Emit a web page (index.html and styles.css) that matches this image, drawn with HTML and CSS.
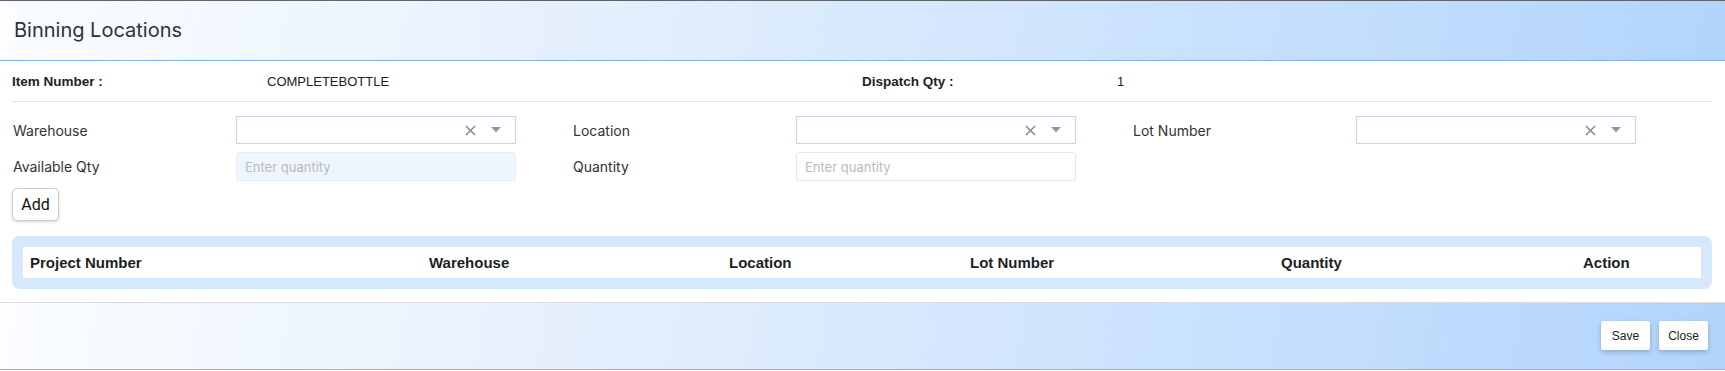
FILE: index.html
```html
<!DOCTYPE html>
<html lang="en">
<head>
<meta charset="utf-8">
<title>Binning Locations</title>
<link rel="stylesheet" href="styles.css">
</head>
<body>
<div class="topline"></div>
<div class="modal">
  <header class="modal-header">
    <h4 class="modal-title">Binning Locations</h4>
  </header>
  <div class="modal-body">
    <div class="info-row">
      <span class="info-label">Item Number :</span>
      <span class="info-value">COMPLETEBOTTLE</span>
      <span class="info-label">Dispatch Qty :</span>
      <span class="info-value">1</span>
    </div>
    <div class="form-grid">
      <label class="field-label">Warehouse</label>
      <div class="select">
        <span class="select-clear"><svg width="11" height="11" viewBox="0 0 11 11"><path d="M1 1 L10 10 M10 1 L1 10" stroke="#8a8a8a" stroke-width="1.5" fill="none"/></svg></span>
        <span class="select-arrow"><svg width="10" height="6" viewBox="0 0 10 6"><path d="M0 0 H10 L5 5.5 Z" fill="#9a9a9a"/></svg></span>
      </div>
      <span class="spacer"></span>
      <label class="field-label">Location</label>
      <div class="select">
        <span class="select-clear"><svg width="11" height="11" viewBox="0 0 11 11"><path d="M1 1 L10 10 M10 1 L1 10" stroke="#8a8a8a" stroke-width="1.5" fill="none"/></svg></span>
        <span class="select-arrow"><svg width="10" height="6" viewBox="0 0 10 6"><path d="M0 0 H10 L5 5.5 Z" fill="#9a9a9a"/></svg></span>
      </div>
      <span class="spacer"></span>
      <label class="field-label">Lot Number</label>
      <div class="select">
        <span class="select-clear"><svg width="11" height="11" viewBox="0 0 11 11"><path d="M1 1 L10 10 M10 1 L1 10" stroke="#8a8a8a" stroke-width="1.5" fill="none"/></svg></span>
        <span class="select-arrow"><svg width="10" height="6" viewBox="0 0 10 6"><path d="M0 0 H10 L5 5.5 Z" fill="#9a9a9a"/></svg></span>
      </div>
      <span class="spacer"></span>

      <label class="field-label">Available Qty</label>
      <input class="text-input disabled" type="text" placeholder="Enter quantity" disabled>
      <span class="spacer"></span>
      <label class="field-label">Quantity</label>
      <input class="text-input" type="text" placeholder="Enter quantity">
      <span class="spacer"></span>
    </div>
    <button class="add-btn" type="button">Add</button>
    <div class="table-box">
      <div class="table-head">
        <span>Project Number</span>
        <span>Warehouse</span>
        <span>Location</span>
        <span>Lot Number</span>
        <span>Quantity</span>
        <span>Action</span>
      </div>
    </div>
  </div>
  <footer class="modal-footer">
    <button class="footer-btn" type="button">Save</button>
    <button class="footer-btn" type="button">Close</button>
  </footer>
</div>
</body>
</html>
```

FILE: styles.css
```css
* { box-sizing: border-box; }

html, body {
  margin: 0;
  padding: 0;
  background: #ffffff;
  width: 1725px;
  height: 371px;
  overflow: hidden;
}

.topline {
  height: 1px;
  background: #5f646b;
}

.modal {
  display: flex;
  flex-direction: column;
}

.modal-header {
  height: 60px;
  background: linear-gradient(100deg, #fbfdff 0%, #e4effd 35%, #c9e1fd 70%, #b2d4fc 100%);
  border-bottom: 1px solid #7ab3f4;
  display: flex;
  align-items: center;
  padding-left: 14px;
}

.modal-title {
  margin: 0;
  font-family: Inter, "Noto Sans", sans-serif;
  font-weight: 400;
  font-size: 20px;
  color: #2f3339;
  position: relative;
  top: -1px;
}

.modal-body {
  padding: 0 13px 0 12px;
}

.info-row {
  display: grid;
  grid-template-columns: 255px 595px 255px 1fr;
  align-items: center;
  height: 41px;
  border-bottom: 1px solid #e2e2e2;
  font-family: "Liberation Sans", Arial, sans-serif;
  color: #222;
}

.info-label {
  font-weight: 700;
  font-size: 13.5px;
}

.info-value {
  font-size: 13px;
}

.form-grid {
  margin-top: 14px;
  display: grid;
  grid-template-columns: repeat(3, 224px 280px 56px);
  grid-template-rows: 28px 29px;
  row-gap: 8px;
  align-items: center;
}

.field-label {
  font-family: Inter, "Noto Sans", sans-serif;
  font-size: 14px;
  color: #333;
  padding-left: 1px;
}

.select {
  height: 28px;
  border: 1px solid #c7d6e6;
  background: #fff;
  display: flex;
  align-items: center;
  justify-content: flex-end;
  padding-right: 14px;
  gap: 15px;
}

.select-clear, .select-arrow {
  display: flex;
  align-items: center;
}

.text-input {
  height: 29px;
  width: 100%;
  border: 1px solid #e4e6e9;
  border-radius: 3px;
  background: #fff;
  padding: 0 8px;
  font-family: Inter, "Noto Sans", sans-serif;
  font-size: 13px;
  outline: none;
}

.text-input::placeholder {
  color: #b9bcc0;
}

.text-input.disabled {
  background: #eef5fd;
  border-color: #e6edf5;
}

.add-btn {
  margin-top: 7px;
  height: 33px;
  width: 47px;
  padding: 0;
  border: 1px solid #cfcfcf;
  border-radius: 5px;
  background: #fff;
  box-shadow: 0 1px 3px rgba(0,0,0,0.18);
  font-family: Roboto, "Liberation Sans", sans-serif;
  font-size: 16px;
  color: #111;
}

.table-box {
  margin-top: 15px;
  background: #d7e8fd;
  border-radius: 8px;
  padding: 11px 11px;
}

.table-head {
  background: #fff;
  height: 31px;
  display: grid;
  grid-template-columns: 399px 300px 241px 311px 302px 1fr;
  align-items: center;
  font-family: "Liberation Sans", Arial, sans-serif;
  font-weight: 700;
  font-size: 15px;
  color: #1c1f24;
}

.table-head span {
  padding-left: 7px;
}

.modal-footer {
  margin-top: 13px;
  border-top: 1px solid #dcdcdc;
  height: 68px;
  background: linear-gradient(100deg, #fbfdff 0%, #e4effd 35%, #c9e1fd 70%, #b2d4fc 100%);
  border-bottom: 1px solid #8bb8ec;
  display: flex;
  justify-content: flex-end;
  align-items: flex-start;
  padding: 18px 17px 0 0;
  gap: 9px;
}

.footer-btn {
  height: 29px;
  width: 49px;
  padding: 0;
  border: none;
  border-radius: 2px;
  background: #fff;
  box-shadow: 0 2px 5px rgba(0,0,0,0.22);
  font-family: "Liberation Sans", Arial, sans-serif;
  font-size: 12px;
  color: #222;
}
```
